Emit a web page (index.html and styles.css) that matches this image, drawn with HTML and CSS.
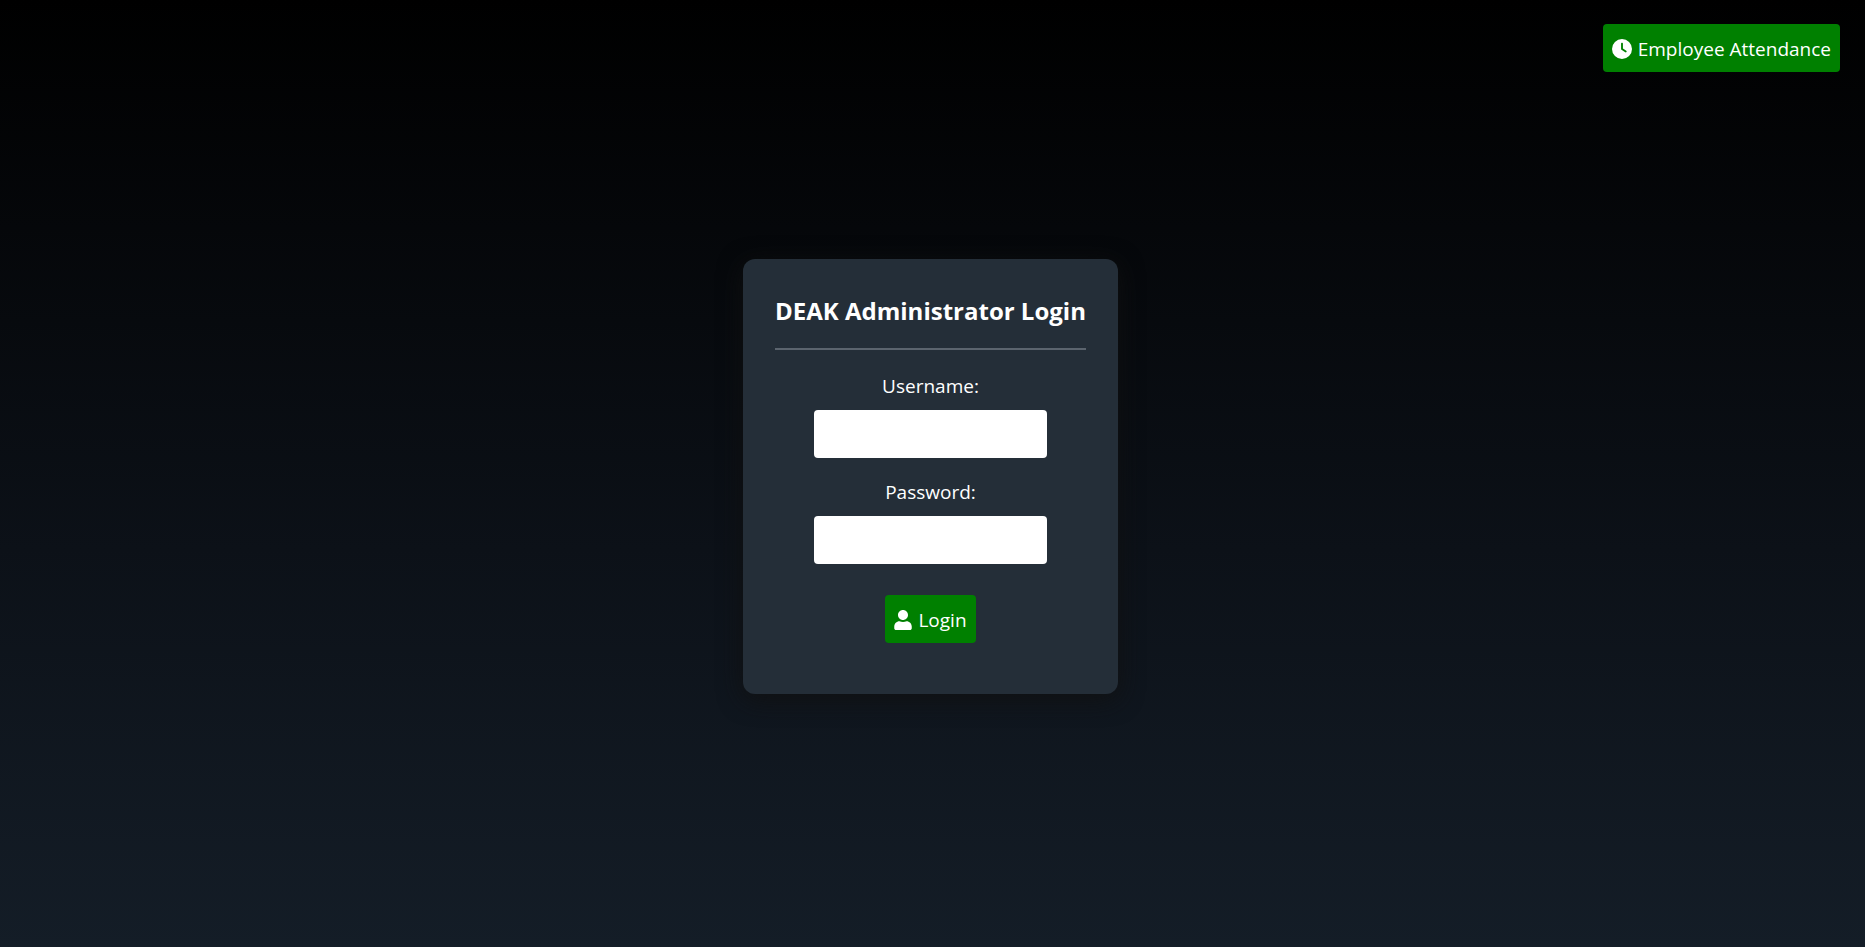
FILE: index.html
```html
<!DOCTYPE html>
<html lang="en">
<head>
  <meta charset="utf-8">
  <meta name="viewport" content="width=device-width, initial-scale=1">
  <title>DEAK Administrator Login</title>
  <link rel="stylesheet" href="styles.css">
</head>
<body>
  <header class="top-bar">
    <button type="button" class="button">
      <svg class="icon icon-clock" viewBox="0 0 512 512" aria-hidden="true">
        <path fill="currentColor" d="M256 0a256 256 0 1 1 0 512A256 256 0 1 1 256 0zM232 120V256c0 8 4 15.500 10.700 20l96 64c11 7.400 25.900 4.400 33.300-6.700s4.400-25.900-6.700-33.300L280 243.200V120c0-13.300-10.700-24-24-24s-24 10.700-24 24z"/>
      </svg>
      Employee Attendance
    </button>
  </header>
  <main class="login">
    <form class="card">
      <h1 class="card-title">DEAK Administrator Login</h1>
      <hr class="divider">
      <label class="label" for="username">Username:</label>
      <input class="field" type="text" id="username" name="username">
      <label class="label" for="password">Password:</label>
      <input class="field" type="password" id="password" name="password">
      <button type="submit" class="button button-login">
        <svg class="icon icon-user" viewBox="0 0 448 512" aria-hidden="true">
          <path fill="currentColor" d="M224 256c70.700 0 128-57.300 128-128S294.700 0 224 0 96 57.300 96 128s57.300 128 128 128zm90 32c-28 10-58 16-90 16s-62-6-90-16C60 288 0 348 0 422v42c0 26.500 21.500 48 48 48h352c26.500 0 48-21.500 48-48v-42c0-74-60-134-134-134z"/>
        </svg>
        Login
      </button>
    </form>
  </main>
</body>
</html>
```
FILE: styles.css
```css
* {
  box-sizing: border-box;
}

body {
  display: grid;
  grid-template-rows: 1fr auto 1fr;
  min-height: 100vh;
  margin: 0;
  padding: 6px 4px 0 0;
  background: linear-gradient(to bottom, #000000, #0c1118 58%, #141d27);
  color: #ffffff;
  font-family: "Segoe UI", "Open Sans", "Noto Sans", sans-serif;
  font-size: 19px;
  line-height: 27px;
}

.top-bar {
  display: flex;
  justify-content: flex-end;
  align-items: flex-start;
  padding: 18px 21px;
}

.button {
  display: flex;
  align-items: center;
  gap: 6px;
  height: 48px;
  padding: 2px 9px 0;
  border: 0;
  border-radius: 4px;
  background: #008000;
  color: inherit;
  font: inherit;
  white-space: nowrap;
  cursor: pointer;
}

.icon {
  flex: none;
  height: 20px;
}

.icon-clock {
  width: 20px;
}

.icon-user {
  width: 18px;
}

.login {
  display: flex;
  justify-content: center;
}

.card {
  display: flex;
  flex-direction: column;
  align-items: center;
  padding: 32px 32px 51px;
  border-radius: 12px;
  background: #242e38;
  box-shadow: 0 5px 24px rgba(17, 17, 17, 0.9);
}

.card-title {
  margin: 0;
  font-size: 24px;
  font-weight: 700;
  line-height: 40px;
}

.divider {
  width: 100%;
  height: 2px;
  margin: 17px 0 2px;
  border: 0;
  background: #5b646e;
}

.label {
  margin: 21px 0 10px;
}

.field {
  width: 75%;
  height: 48px;
  padding: 0 10px;
  border: 0;
  border-radius: 4px;
  background: #ffffff;
  color: #111111;
  font: inherit;
}

.button-login {
  margin-top: 31px;
}
```
